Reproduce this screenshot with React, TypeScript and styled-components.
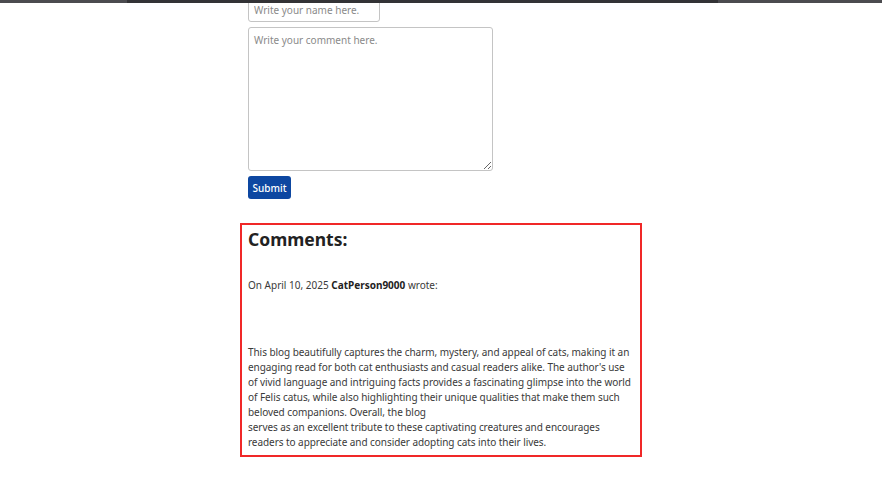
import React from "react";
import styled, { createGlobalStyle } from "styled-components";

const Global = createGlobalStyle`
  html, body { margin: 0; padding: 0; background: #fff; }
  body { font-family: "Noto Sans", "Open Sans", sans-serif; color: #3a3a3a; overflow: hidden; }
`;

const TopBar = styled.div`
  position: fixed;
  top: 0; left: 0; right: 0;
  height: 3px;
  background: #4b4b4f;
  z-index: 10;
  display: flex;
  justify-content: center;
`;

const TopBarInner = styled.div`
  width: 591px;
  margin-left: -38px;
  height: 3px;
  background: #333336;
`;

const Page = styled.main`
  width: 402px;
  margin: -3px 0 0 240px;
`;

const Form = styled.form`
  display: flex;
  flex-direction: column;
  align-items: flex-start;
  gap: 5px;
  padding-left: 8px;
`;

const NameInput = styled.input`
  box-sizing: border-box;
  width: 132px;
  height: 25px;
  border: 1px solid #c4c4c4;
  border-radius: 3px;
  padding: 2px 5px;
  font-family: "Noto Sans", sans-serif;
  font-size: 10px;
  &::placeholder { color: #8a8a8a; }
`;

const CommentArea = styled.textarea`
  box-sizing: border-box;
  width: 245px;
  height: 144px;
  border: 1px solid #c4c4c4;
  border-radius: 3px;
  padding: 5px 5px;
  font-family: "Noto Sans", sans-serif;
  font-size: 10px;
  resize: vertical;
  margin: 0;
  &::placeholder { color: #8a8a8a; }
`;

const SubmitButton = styled.button`
  box-sizing: border-box;
  height: 23px;
  width: 43px;
  padding: 0;
  border: none;
  border-radius: 3px;
  background: #0d47a1;
  color: #fff;
  font-family: "Noto Sans", sans-serif;
  font-size: 10px;
  font-weight: 500;
`;

const CommentsBox = styled.section`
  box-sizing: border-box;
  margin-top: 24px;
  width: 402px;
  height: 234px;
  border: 2px solid #f02828;
  padding: 0 7px 0 6px;
`;

const Heading = styled.h2`
  margin: 0;
  font-size: 17.5px;
  font-weight: 700;
  color: #222;
  line-height: 28px;
`;

const Meta = styled.p`
  margin: 25px 0 0;
  font-size: 10px;
  line-height: 15px;
  b { font-weight: 700; color: #222; }
`;

const Body = styled.p`
  margin: 52px 0 0;
  font-size: 10px;
  line-height: 15px;
  letter-spacing: -0.06px;
`;

export default function App() {
  return (
    <>
      <Global />
      <TopBar><TopBarInner /></TopBar>
      <Page>
        <Form onSubmit={(e) => e.preventDefault()}>
          <NameInput placeholder="Write your name here." />
          <CommentArea placeholder="Write your comment here." />
          <SubmitButton type="submit">Submit</SubmitButton>
        </Form>
        <CommentsBox>
          <Heading>Comments:</Heading>
          <Meta>
            On April 10, 2025 <b>CatPerson9000</b> wrote:
          </Meta>
          <Body>
            This blog beautifully captures the charm, mystery, and appeal of cats, making it an engaging read for both cat enthusiasts and casual readers alike. The author's use of vivid language and intriguing facts provides a fascinating glimpse into the world of Felis catus, while also highlighting their unique qualities that make them such beloved companions. Overall, the blog
            <br />
            serves as an excellent tribute to these captivating creatures and encourages readers to appreciate and consider adopting cats into their lives.
          </Body>
        </CommentsBox>
      </Page>
    </>
  );
}
